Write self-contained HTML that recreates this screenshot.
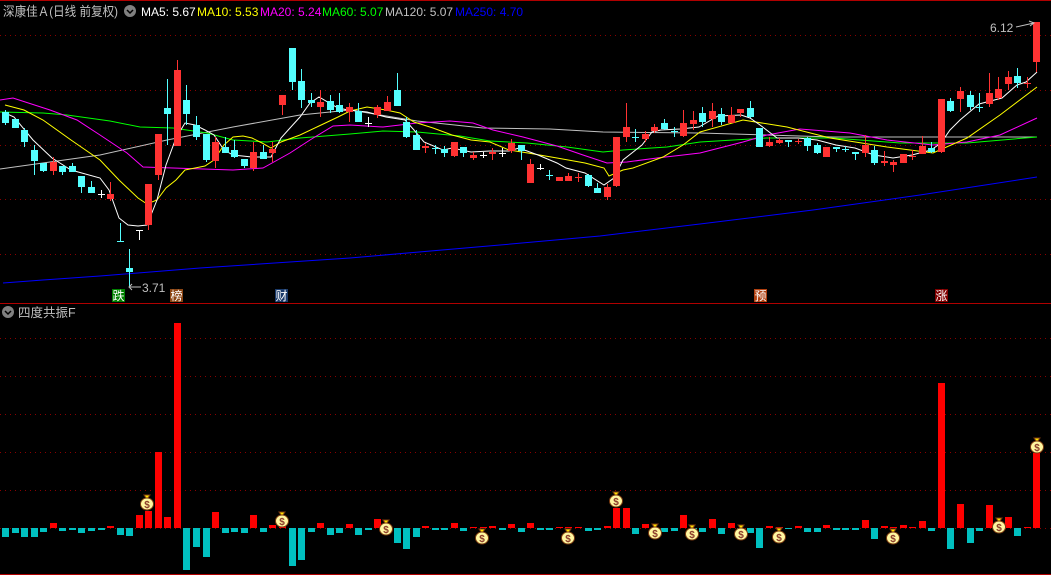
<!DOCTYPE html>
<html><head><meta charset="utf-8"><style>
html,body{margin:0;padding:0;background:#000;width:1051px;height:575px;overflow:hidden}
svg{display:block}
text{font-family:"Liberation Sans","Noto Sans CJK SC",sans-serif}
</style></head><body>
<svg id="s" width="1051" height="575" viewBox="0 0 1051 575" xmlns="http://www.w3.org/2000/svg">
<rect width="1051" height="575" fill="#000"/>
<g id="grid" stroke="#8a0000" stroke-width="1" stroke-dasharray="1 4">
<line x1="0" y1="35.5" x2="1051" y2="35.5"/><line x1="0" y1="90.5" x2="1051" y2="90.5"/>
<line x1="0" y1="145.5" x2="1051" y2="145.5"/><line x1="0" y1="199.5" x2="1051" y2="199.5"/>
<line x1="0" y1="254.5" x2="1051" y2="254.5"/>
<line x1="0" y1="338.5" x2="1051" y2="338.5"/><line x1="0" y1="376.5" x2="1051" y2="376.5"/>
<line x1="0" y1="414.5" x2="1051" y2="414.5"/><line x1="0" y1="452.5" x2="1051" y2="452.5"/>
<line x1="0" y1="490.5" x2="1051" y2="490.5"/><line x1="0" y1="528.5" x2="1051" y2="528.5"/>
</g>
<line x1="0" y1="0.5" x2="1051" y2="0.5" stroke="#b00000"/>
<line x1="0" y1="303.5" x2="1051" y2="303.5" stroke="#b00000"/>
<line x1="0" y1="574.5" x2="1051" y2="574.5" stroke="#b00000"/>
<g fill="none" stroke-width="1">
<polyline stroke="#0000ff" points="3,283 43,280 100,276 200,268 350,258 500,245 600,236 700,224 813,210 920,195 1037,177"/>
<polyline stroke="#c0c0c0" points="0,169 100,155 167,140 233,127 300,115 350,110 417,121 483,128 550,129 603,132 700,133 833,137 1037,137"/>
<polyline stroke="#00ff00" points="0,112 43,113 67,115 110,121 140,127 173,128 207,133 233,140 267,142 300,138 350,134 383,131 417,132 460,136 490,141 527,143 567,147 603,152 623,150 667,147 700,142 767,138 833,138 900,143 967,143 1037,137"/>
<polyline stroke="#ff00ff" points="0,100 13,98 50,110 77,120 100,135 127,153 143,167 173,168 233,170 263,168 290,153 310,140 333,126 350,125 383,127 417,123 450,121 473,123 493,130 523,137 557,146 583,155 607,163 627,162 657,158 683,155 700,153 743,142 767,135 800,129 850,133 887,140 933,145 967,142 1000,135 1037,118"/>
<polyline stroke="#ffff00" points="5,105 24,110 43,120 71,140 100,160 119,180 138,198 147,204 157,200 166,188 176,180 185,170 195,168 205,166 214,160 224,145 233,137 243,136 252,138 262,143 271,148 281,142 300,135 319,126 338,117 350,111 367,107 386,110 400,113 414,122 433,128 452,135 471,140 490,142 509,150 528,153 557,158 585,163 604,168 609,176 623,170 633,168 663,157 683,145 700,132 743,120 787,127 830,138 887,147 933,153 967,138 1000,115 1037,87"/>
<polyline stroke="#ffffff" points="5,113 14,117 33,140 52,158 71,170 100,178 109,190 119,218 128,225 138,226 147,225 157,200 166,165 176,138 185,123 195,125 205,130 214,135 224,150 233,155 252,157 271,157 281,138 290,128 300,117 310,103 319,97 338,108 348,110 367,112 386,117 405,120 414,130 424,142 443,150 452,148 471,152 490,151 509,151 519,148 538,155 557,163 566,168 585,173 604,185 614,178 623,160 642,145 652,132 661,130 680,129 699,127 718,116 741,115 750,118 760,125 777,138 798,138 817,140 836,145 855,148 874,155 893,158 912,155 931,150 941,143 950,130 960,120 979,104 1002,98 1017,85 1026,82 1037,72"/>
</g>
<g id="candles"></g>
<g id="bars"></g>
<g id="bags"></g>
<text x="3" y="16" font-size="13" fill="#c0c0c0" textLength="115" lengthAdjust="spacingAndGlyphs">深康佳Ａ(日线 前复权)</text>
<circle cx="130" cy="11" r="6" fill="#808080"/><path d="M127,10 L130,13 L133,10" stroke="#000" stroke-width="1.5" fill="none"/>
<g font-size="12">
<text x="141" y="16" fill="#ffffff">MA5: 5.67</text>
<text x="197" y="16" fill="#ffff00">MA10: 5.53</text>
<text x="260" y="16" fill="#ff00ff">MA20: 5.24</text>
<text x="322" y="16" fill="#00ff00">MA60: 5.07</text>
<text x="385" y="16" fill="#c0c0c0">MA120: 5.07</text>
<text x="455" y="16" fill="#0000ff">MA250: 4.70</text>
</g>
<text x="990" y="32" font-size="12" fill="#c0c0c0">6.12</text>
<path d="M1016,27 L1034,23 M1029,21 L1034,23 L1030,26" stroke="#c0c0c0" fill="none"/>
<path d="M129,287 L141,287 M132,284 L129,287 L132,290" stroke="#c0c0c0" fill="none"/>
<text x="142" y="292" font-size="12" fill="#c0c0c0">3.71</text>
<rect x="112" y="289" width="13" height="13" fill="#008000"/><text x="112.5" y="300" font-size="12" fill="#fff">跌</text>
<rect x="170" y="289" width="13" height="13" fill="#8b4513"/><text x="170.5" y="300" font-size="12" fill="#fff">榜</text>
<rect x="275" y="289" width="13" height="13" fill="#1a3a6a"/><text x="275.5" y="300" font-size="12" fill="#fff">财</text>
<rect x="754" y="289" width="13" height="13" fill="#b04010"/><text x="754.5" y="300" font-size="12" fill="#fff">预</text>
<rect x="935" y="289" width="13" height="13" fill="#800000"/><text x="935.5" y="300" font-size="12" fill="#fff">涨</text>
<circle cx="8" cy="312" r="6" fill="#808080"/><path d="M5,311 L8,314 L11,311" stroke="#000" stroke-width="1.5" fill="none"/>
<text x="18" y="317" font-size="12.5" fill="#c0c0c0">四度共振F</text>
</svg>
<script>
var NS="http://www.w3.org/2000/svg";
function X(i){return 5+i*9.55;}
function el(p,t,a){var e=document.createElementNS(NS,t);for(var k in a)e.setAttribute(k,a[k]);p.appendChild(e);return e;}
var C=[[112,123,110,125,'c'],[119,128,119,128,'c'],[130,142,128,147,'c'],[150,161,145,175,'c'],[163,171,163,172,'c'],[162,171,157,175,'r'],[166,172,166,175,'c'],[166,172,163,172,'c'],[176,187,176,193,'c'],[187,193,181,193,'c'],[194,194,190,198,'w'],[194,199,182,201,'r'],[241,242,223,242,'c'],[268,272,249,287,'c'],[230,231,230,240,'w'],[184,225,184,230,'r'],[134,175,134,180,'r'],[108,114,79,145,'c'],[70,146,60,146,'r'],[100,114,85,125,'c'],[125,137,116,140,'c'],[134,160,134,162,'c'],[142,161,137,168,'r'],[147,153,137,153,'c'],[150,157,140,158,'c'],[159,166,159,168,'c'],[152,168,142,171,'r'],[152,159,145,159,'c'],[149,153,142,162,'r'],[95,105,95,115,'r'],[48,82,48,90,'c'],[81,100,69,108,'c'],[100,103,93,107,'c'],[102,107,90,117,'r'],[101,110,95,113,'c'],[105,112,93,113,'c'],[107,112,103,122,'r'],[111,122,103,122,'c'],[123,123,117,127,'w'],[107,115,105,118,'r'],[102,111,96,111,'r'],[90,106,73,106,'c'],[122,137,117,138,'c'],[135,150,130,150,'c'],[146,148,143,153,'r'],[148,148,145,154,'c'],[149,153,146,157,'c'],[142,156,142,157,'r'],[147,153,147,157,'c'],[155,158,152,160,'r'],[155,155,152,158,'w'],[152,154,148,160,'r'],[153,153,148,157,'w'],[143,151,139,153,'r'],[145,151,145,160,'c'],[164,183,159,183,'r'],[168,168,164,170,'w'],[175,175,170,180,'c'],[177,181,177,181,'r'],[176,181,173,181,'r'],[177,177,173,182,'r'],[175,186,174,187,'c'],[188,193,183,193,'c'],[187,197,184,200,'r'],[137,186,137,187,'r'],[127,137,103,142,'r'],[137,137,129,142,'c'],[134,139,131,142,'r'],[127,131,124,133,'r'],[123,129,119,130,'c'],[131,131,127,137,'c'],[123,136,110,137,'r'],[120,124,111,130,'r'],[113,122,107,127,'c'],[111,119,103,127,'r'],[114,122,108,125,'c'],[115,123,107,123,'r'],[109,113,109,117,'r'],[108,117,101,118,'c'],[128,147,128,147,'c'],[142,146,137,147,'r'],[140,143,138,144,'r'],[140,142,140,147,'c'],[141,141,139,144,'r'],[138,146,137,151,'c'],[145,153,143,154,'c'],[147,157,147,157,'r'],[147,149,147,152,'c'],[149,149,146,152,'c'],[152,154,152,160,'c'],[145,153,135,157,'r'],[150,163,146,165,'c'],[161,163,151,166,'r'],[162,165,160,172,'r'],[154,163,154,163,'r'],[156,156,150,160,'r'],[146,154,136,154,'r'],[148,152,142,153,'c'],[99,152,99,153,'r'],[101,111,98,112,'c'],[91,99,87,112,'r'],[95,107,91,110,'c'],[107,107,93,112,'c'],[93,104,73,107,'r'],[89,98,77,100,'r'],[77,84,71,90,'r'],[76,83,68,88,'c'],[83,83,77,88,'r'],[22,62,22,72,'r']];
var col={r:'#ff3232',c:'#54ffff',w:'#ffffff'};
var g=document.getElementById('candles');
C.forEach(function(d,i){var x=Math.round(X(i));var c=col[d[4]];
 el(g,'rect',{x:x,y:d[2],width:1,height:Math.max(1,d[3]-d[2]),fill:c});
 var h=d[1]-d[0];if(h<1)h=1;
 el(g,'rect',{x:x-3,y:d[0],width:7,height:h,fill:c});});
var B=[537,533,537,537,532,523,531,530,533,531,530,526,535,536,515,511,452,517,323,570,547,557,512,533,532,533,515,532,525,526,566,560,532,523,535,533,524,535,530,519,526,543,549,537,526,530,530,523,531,527,527,526,530,524,532,523,530,530,527,527,527,531,530,526,508,508,534,524,530,532,531,515,530,532,519,534,523,530,533,548,526,527,529,526,532,532,525,530,530,530,520,539,526,527,525,527,521,531,383,549,504,543,531,505,527,517,536,527,453];
var gb=document.getElementById('bars');
B.forEach(function(v,i){var x=Math.round(X(i))-3;
 if(v<528)el(gb,'rect',{x:x,y:v,width:7,height:528-v,fill:'#ff0000'});
 else el(gb,'rect',{x:x,y:528,width:7,height:Math.max(1,v-528),fill:'#00c0c0'});});
var bags=[[147,503],[282,520],[386,528],[482,537],[568,537],[616,500],[655,532],[692,533],[741,533],[779,536],[893,537],[999,526],[1037,446]];
var gg=document.getElementById('bags');
bags.forEach(function(b){var x=b[0],y=b[1];
 el(gg,'path',{d:'M'+(x-3)+','+(y-8)+' L'+(x+3)+','+(y-8)+' L'+(x+1)+','+(y-5)+' L'+(x-1)+','+(y-5)+'Z',fill:'#ffe000',stroke:'#7a3a10','stroke-width':1});
 el(gg,'ellipse',{cx:x,cy:y+1,rx:6.5,ry:6,fill:'#fff6a0',stroke:'#7a3a10','stroke-width':1});
 var t=el(gg,'text',{x:x,y:y+5,'font-size':10,'font-weight':'bold',fill:'#8b3a2a','text-anchor':'middle'});t.textContent='$';});
</script>
</body></html>
